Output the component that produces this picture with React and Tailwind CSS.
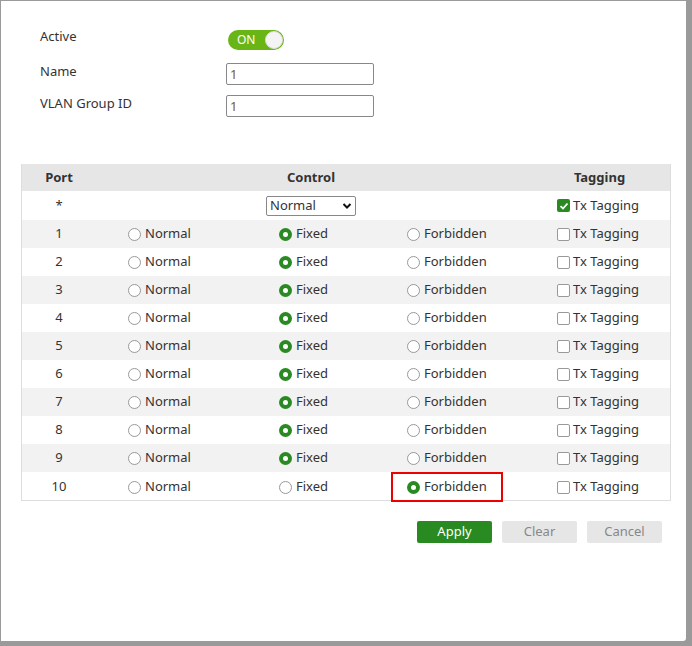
const F = "font-['DejaVu_Sans',sans-serif]";

function Radio({ on }) {
  return on ? (
    <span className="w-[13px] h-[13px] rounded-full bg-[#2a8a22] flex items-center justify-center">
      <span className="block w-[5px] h-[5px] rounded-full bg-white" />
    </span>
  ) : (
    <span className="block w-[13px] h-[13px] rounded-full border border-[#999] bg-white" />
  );
}

function Check({ on }) {
  return on ? (
    <span className="w-[13px] h-[13px] rounded-[2px] bg-[#2a8a22] flex items-center justify-center">
      <svg width="10" height="10" viewBox="0 0 10 10"><path d="M1.5 5.2 L4 7.5 L8.5 2.5" stroke="white" strokeWidth="1.8" fill="none" /></svg>
    </span>
  ) : (
    <span className="block w-[13px] h-[13px] rounded-[2px] border border-[#999] bg-white" />
  );
}

function Opt({ on, label }) {
  return (
    <span className="flex items-center gap-[4px]">
      <Radio on={on} />
      <span>{label}</span>
    </span>
  );
}

export default function App() {
  const rows = Array.from({ length: 10 }, (_, i) => i + 1);
  return (
    <div className={`w-[692px] h-[646px] bg-[#9a9a9a] ${F} text-[13px] text-[#333]`}>
      <div className="ml-[1px] pt-[1px] w-[685px] h-[641px]">
        <div className="w-full h-full bg-white rounded-br-[3px]">
          <div className="pt-[25px] pl-[39px]">
            <div className="flex items-start h-[36px]">
              <span className="w-[188px] pt-[1px]">Active</span>
              <span className="mt-[4px] w-[56px] h-[20px] rounded-full bg-[#6ab516] flex items-center justify-between pl-[9px] pr-[1px] text-white text-[12px]">
                ON
                <span className="block w-[18px] h-[18px] rounded-full bg-[#f4f4f4] border border-[#ddd]" />
              </span>
            </div>
            <div className="flex items-start h-[32px]">
              <span className="w-[186px]">Name</span>
              <span className="mt-[1px] w-[148px] h-[22px] border border-[#888] rounded-[2px] px-[3px] text-[#8a5a00] leading-[20px]">1</span>
            </div>
            <div className="flex items-start h-[32px]">
              <span className="w-[186px]">VLAN Group ID</span>
              <span className="mt-[1px] w-[148px] h-[22px] border border-[#888] rounded-[2px] px-[3px] text-[#8a5a00] leading-[20px]">1</span>
            </div>
          </div>

          <div className="mt-[38px] ml-[20px] w-[650px] border border-[#ddd] border-t-0">
            <div className="grid grid-cols-[74px_182px_128px_150px_115px] h-[27px] items-center bg-[#e6e6e6] font-bold">
              <span className="text-center">Port</span>
              <span className="col-span-3 text-center pr-[30px]">Control</span>
              <span className="text-center pr-[28px]">Tagging</span>
            </div>
            <div className="grid grid-cols-[74px_182px_128px_150px_115px] h-[29px] items-center bg-white">
              <span className="text-center">*</span>
              <span className="col-span-3 flex justify-center pr-[30px]">
                <span className="w-[90px] h-[20px] border border-[#888] rounded-[2px] flex items-center justify-between px-[3px]">
                  Normal
                  <svg width="10" height="8" viewBox="0 0 10 8"><path d="M1.5 2 L5 5.5 L8.5 2" stroke="#111" strokeWidth="2" fill="none" /></svg>
                </span>
              </span>
              <span className="flex items-center gap-[3px] pl-[1px]"><Check on /> Tx Tagging</span>
            </div>
            {rows.map((r) => (
              <div key={r} className={`grid grid-cols-[74px_182px_128px_150px_115px] h-[28px] items-center ${r % 2 ? "bg-[#f2f2f2]" : "bg-white"}`}>
                <span className="text-center">{r}</span>
                <span className="pl-[32px]"><Opt label="Normal" /></span>
                <span className="pl-[1px]"><Opt on={r !== 10} label="Fixed" /></span>
                <span className="pl-[1px]">
                  {r === 10 ? (
                    <span className="-ml-[16px] w-[112px] h-[30px] border-2 border-[#e00] flex items-center pl-[14px]">
                      <Opt on label="Forbidden" />
                    </span>
                  ) : (
                    <Opt label="Forbidden" />
                  )}
                </span>
                <span className="flex items-center gap-[3px] pl-[1px]"><Check /> Tx Tagging</span>
              </div>
            ))}
          </div>

          <div className="flex mt-[20px] ml-[416px] gap-[10px]">
            <span className="w-[75px] h-[22px] bg-[#2a8a22] text-white rounded-[2px] flex items-center justify-center">Apply</span>
            <span className="w-[75px] h-[22px] bg-[#e6e6e6] text-[#888] rounded-[2px] flex items-center justify-center">Clear</span>
            <span className="w-[75px] h-[22px] bg-[#e6e6e6] text-[#888] rounded-[2px] flex items-center justify-center">Cancel</span>
          </div>
        </div>
      </div>
    </div>
  );
}
